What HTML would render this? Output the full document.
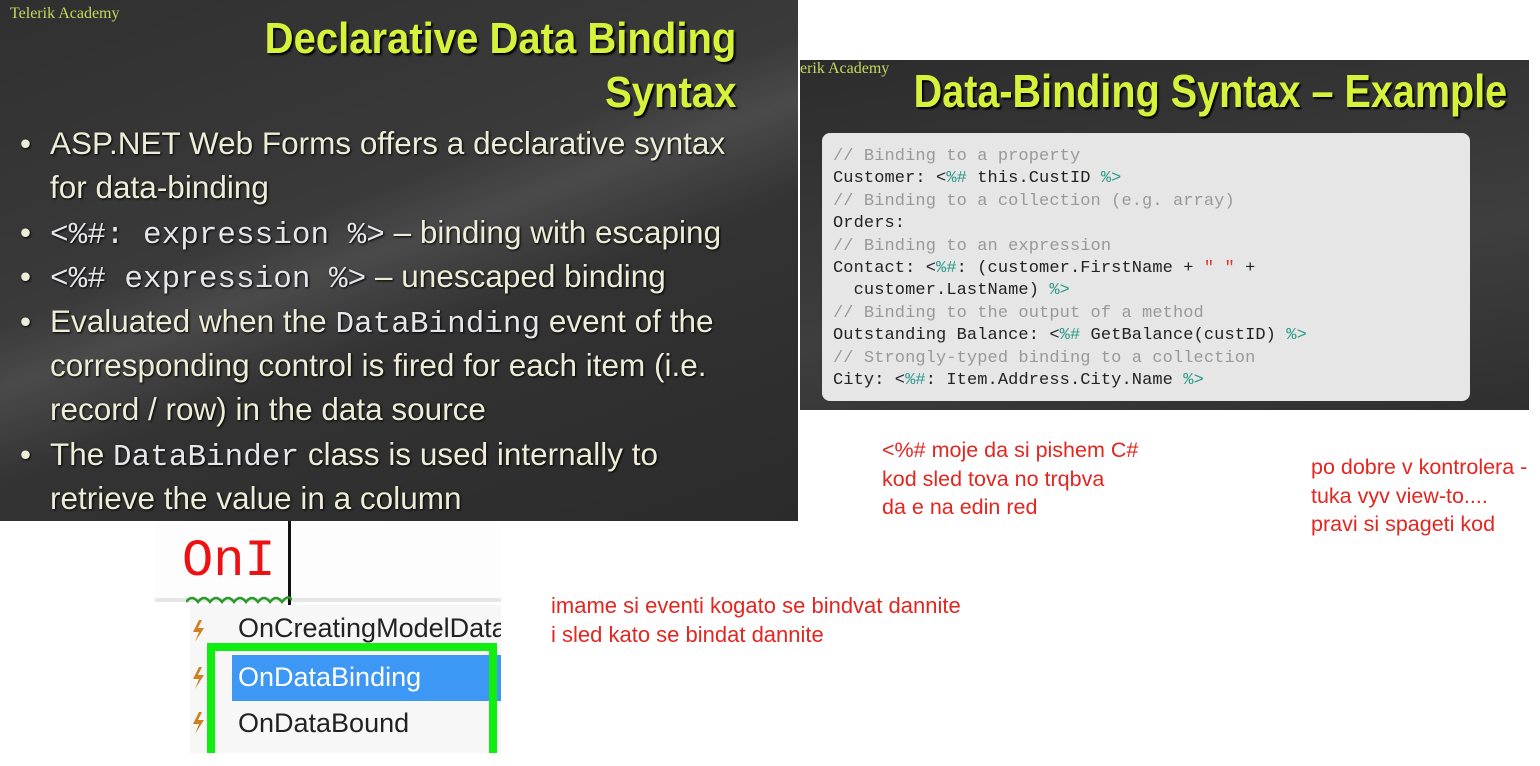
<!DOCTYPE html>
<html><head><meta charset="utf-8"><style>
body{margin:0;width:1540px;height:766px;background:#fff;position:relative;overflow:hidden;font-family:"Liberation Sans",sans-serif}
.a{position:absolute;white-space:nowrap}
#s1{left:0;top:0;width:798px;height:521px;background:linear-gradient(160deg,#303030 0%,#3a3a3a 40%,#4a4a4a 48%,#333 60%,#2b2b2b 100%)}
.t{color:#d6f23a;font-weight:bold;text-shadow:2px 2px 2px #000}
.b div{height:44.4px;line-height:44.4px;position:relative;padding-left:30px;color:#eeeed8;font-size:31.5px;text-shadow:1px 1px 2px #000}
.b div.p::before{content:"•";position:absolute;left:0;top:0}
.m{font-family:"Liberation Mono",monospace;font-size:31px;color:#e6e6ea}
#s2{left:800px;top:60px;width:729px;height:350px;background:linear-gradient(170deg,#2c2c2c,#3e3e3e 60%,#2f2f2f)}
#code{left:822px;top:133px;width:648px;height:268px;background:#e6e6e6;border-radius:8px}
.c{font-family:"Liberation Mono",monospace;font-size:17px;line-height:22.4px;color:#222;letter-spacing:0.1px}
.g{color:#999}.k{color:#2a9a8a}.r{color:#d33}
.n{color:#e3261f;font-size:21.5px;line-height:28.5px}
.it{font-size:27px;color:#222}
</style></head><body>
<div id="s1" class="a">
<div class="a" style="left:10px;top:5px;font-family:'Liberation Serif',serif;font-size:16px;color:#c8d860">Telerik Academy</div>
<div class="a t" style="right:62px;top:12px;font-size:44px;text-align:right;line-height:54px;transform:scaleX(0.91);transform-origin:right">Declarative Data Binding<br>Syntax</div>
<div class="a b" style="left:20px;top:121px">
<div class="p">ASP.NET Web Forms offers a declarative syntax</div>
<div>for data-binding</div>
<div class="p"><span class="m">&lt;%#: expression %&gt;</span> – binding with escaping</div>
<div class="p"><span class="m">&lt;%# expression %&gt;</span> – unescaped binding</div>
<div class="p">Evaluated when the <span class="m">DataBinding</span> event of the</div>
<div>corresponding control is fired for each item (i.e.</div>
<div>record / row) in the data source</div>
<div class="p">The <span class="m">DataBinder</span> class is used internally to</div>
<div>retrieve the value in a column</div>
</div>
</div>
<div id="s2" class="a">
<div class="a" style="left:0;top:0;font-family:'Liberation Serif',serif;font-size:16px;color:#c8d860">erik Academy</div>
<div class="a t" style="right:22px;top:4px;font-size:46px;transform:scaleX(0.86);transform-origin:right">Data-Binding Syntax – Example</div>
</div>
<div id="code" class="a"></div>
<div class="a c" style="left:833px;top:146px">
<div class="g">// Binding to a property</div>
<div>Customer: &lt;<span class="k">%#</span> this.CustID <span class="k">%&gt;</span></div>
<div class="g">// Binding to a collection (e.g. array)</div>
<div>Orders:</div>
<div class="g">// Binding to an expression</div>
<div>Contact: &lt;<span class="k">%#</span>: (customer.FirstName + <span class="r">" "</span> +</div>
<div>&nbsp; customer.LastName) <span class="k">%&gt;</span></div>
<div class="g">// Binding to the output of a method</div>
<div>Outstanding Balance: &lt;<span class="k">%#</span> GetBalance(custID) <span class="k">%&gt;</span></div>
<div class="g">// Strongly-typed binding to a collection</div>
<div>City: &lt;<span class="k">%#</span>: Item.Address.City.Name <span class="k">%&gt;</span></div>
</div>
<div class="a n" style="left:882px;top:436px">&lt;%# moje da si pishem C#<br>kod sled tova no trqbva<br>da e na edin red</div>
<div class="a n" style="left:1311px;top:453px">po dobre v kontrolera -<br>tuka vyv view-to....<br>pravi si spageti kod</div>
<div class="a n" style="left:551px;top:592px;font-size:22px">imame si eventi kogato se bindvat dannite<br>i sled kato se bindat dannite</div>
<div class="a" style="left:155px;top:521px;width:346px;height:232px;overflow:hidden">
<div class="a" style="left:0;top:0;width:346px;height:80px;background:#fdfdfd"></div>
<div class="a" style="left:0;top:77px;width:346px;height:4px;background:#e6e6e6"></div>
<div class="a" style="left:35px;top:84px;width:311px;height:148px;background:#f7f7f7"></div>
<div class="a" style="left:27px;top:9px;font-family:'Liberation Mono',monospace;font-size:52px;color:#ee1111;line-height:64px">OnI</div>
<div class="a" style="left:133px;top:0;width:3px;height:84px;background:#111"></div>
<svg class="a" style="left:31px;top:73px" width="106" height="10"><path d="M0 8 Q6 0 12 8 Q18 0 24 8 Q30 0 36 8 Q42 0 48 8 Q54 0 60 8 Q66 0 72 8 Q78 0 84 8 Q90 0 96 8 Q102 0 106 6" fill="none" stroke="#2a9a2a" stroke-width="2.5"/></svg>
<div class="a" style="left:77px;top:134px;width:269px;height:46px;background:#3d97f5"></div>
<div class="a" style="left:52px;top:122px;width:274px;height:110px;border:8px solid #11ee11;border-bottom:none"></div>
<div class="a it" style="left:83px;top:92px">OnCreatingModelData</div>
<div class="a it" style="left:83px;top:141px;color:#fff">OnDataBinding</div>
<div class="a it" style="left:83px;top:187px">OnDataBound</div>
<svg class="a" style="left:35px;top:98px" width="16" height="24"><path d="M9 1 L3 13 L9 13 L5 23 L14 9 L8 9 L12 1Z" fill="#d08020"/></svg>
<svg class="a" style="left:35px;top:145px" width="16" height="24"><path d="M9 1 L3 13 L9 13 L5 23 L14 9 L8 9 L12 1Z" fill="#d08020"/></svg>
<svg class="a" style="left:35px;top:190px" width="16" height="24"><path d="M9 1 L3 13 L9 13 L5 23 L14 9 L8 9 L12 1Z" fill="#d08020"/></svg>
</div>
</body></html>
